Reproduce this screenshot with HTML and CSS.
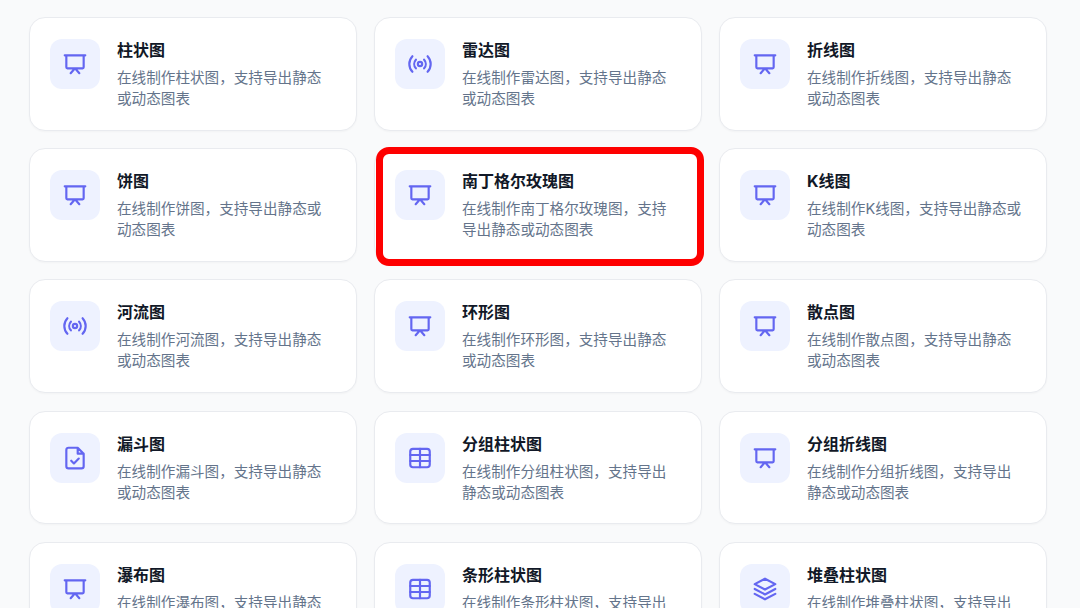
FILE: index.html
```html
<!DOCTYPE html>
<html lang="zh-CN">
<head>
  <meta charset="UTF-8" />
  <meta name="viewport" content="width=device-width, initial-scale=1.0"/>
  <title>在线图表</title>
  <link rel="stylesheet" href="styles.css">
</head>
<body>

  <svg class="icon-defs" aria-hidden="true">
    <symbol id="i-screen" viewBox="0 0 24 24">
      <path d="M2.5 4h19M4 4v11a1 1 0 0 0 1 1h14a1 1 0 0 0 1-1V4M12 16l-4 4.5M12 16l4 4.5"/>
    </symbol>
    <symbol id="i-signal" viewBox="0 0 24 24">
      <circle cx="12" cy="12" r="2"/>
      <path d="M8.2 8a6 6 0 0 0 0 8M15.8 8a6 6 0 0 1 0 8M5 4.8a10.5 10.5 0 0 0 0 14.4M19 4.8a10.5 10.5 0 0 1 0 14.4"/>
    </symbol>
    <symbol id="i-doc" viewBox="0 0 24 24">
      <path d="M14.5 2.5H6a2 2 0 0 0-2 2v15a2 2 0 0 0 2 2h12a2 2 0 0 0 2-2V8zM14.5 2.5V8H20M8.5 14.5l2.5 2.5 4.5-4.5"/>
    </symbol>
    <symbol id="i-table" viewBox="0 0 24 24">
      <rect x="3" y="3.5" width="18" height="17" rx="2.5"/>
      <path d="M3 9.2h18M3 14.8h18M12 3.5v17"/>
    </symbol>
    <symbol id="i-stack" viewBox="0 0 24 24">
      <path d="M12 2.5 2.5 7.5 12 12.5l9.5-5zM2.5 12 12 17l9.5-5M2.5 16.5l9.5 5 9.5-5"/>
    </symbol>
  </svg>

  <div class="chart-grid">

    <div class="card">
      <div class="card-icon"><svg><use href="#i-screen"/></svg></div>
      <div class="card-text">
        <h3>柱状图</h3>
        <p>在线制作柱状图，支持导出静态或动态图表</p>
      </div>
    </div>
    <div class="card">
      <div class="card-icon"><svg><use href="#i-signal"/></svg></div>
      <div class="card-text">
        <h3>雷达图</h3>
        <p>在线制作雷达图，支持导出静态或动态图表</p>
      </div>
    </div>
    <div class="card">
      <div class="card-icon"><svg><use href="#i-screen"/></svg></div>
      <div class="card-text">
        <h3>折线图</h3>
        <p>在线制作折线图，支持导出静态或动态图表</p>
      </div>
    </div>

    <div class="card">
      <div class="card-icon"><svg><use href="#i-screen"/></svg></div>
      <div class="card-text">
        <h3>饼图</h3>
        <p>在线制作饼图，支持导出静态或动态图表</p>
      </div>
    </div>
    <div class="card highlighted">
      <div class="card-icon"><svg><use href="#i-screen"/></svg></div>
      <div class="card-text">
        <h3>南丁格尔玫瑰图</h3>
        <p>在线制作南丁格尔玫瑰图，支持导出静态或动态图表</p>
      </div>
    </div>
    <div class="card">
      <div class="card-icon"><svg><use href="#i-screen"/></svg></div>
      <div class="card-text">
        <h3>K线图</h3>
        <p>在线制作K线图，支持导出静态或动态图表</p>
      </div>
    </div>

    <div class="card">
      <div class="card-icon"><svg><use href="#i-signal"/></svg></div>
      <div class="card-text">
        <h3>河流图</h3>
        <p>在线制作河流图，支持导出静态或动态图表</p>
      </div>
    </div>
    <div class="card">
      <div class="card-icon"><svg><use href="#i-screen"/></svg></div>
      <div class="card-text">
        <h3>环形图</h3>
        <p>在线制作环形图，支持导出静态或动态图表</p>
      </div>
    </div>
    <div class="card">
      <div class="card-icon"><svg><use href="#i-screen"/></svg></div>
      <div class="card-text">
        <h3>散点图</h3>
        <p>在线制作散点图，支持导出静态或动态图表</p>
      </div>
    </div>

    <div class="card">
      <div class="card-icon"><svg><use href="#i-doc"/></svg></div>
      <div class="card-text">
        <h3>漏斗图</h3>
        <p>在线制作漏斗图，支持导出静态或动态图表</p>
      </div>
    </div>
    <div class="card">
      <div class="card-icon"><svg><use href="#i-table"/></svg></div>
      <div class="card-text">
        <h3>分组柱状图</h3>
        <p>在线制作分组柱状图，支持导出静态或动态图表</p>
      </div>
    </div>
    <div class="card">
      <div class="card-icon"><svg><use href="#i-screen"/></svg></div>
      <div class="card-text">
        <h3>分组折线图</h3>
        <p>在线制作分组折线图，支持导出静态或动态图表</p>
      </div>
    </div>

    <div class="card">
      <div class="card-icon"><svg><use href="#i-screen"/></svg></div>
      <div class="card-text">
        <h3>瀑布图</h3>
        <p>在线制作瀑布图，支持导出静态或动态图表</p>
      </div>
    </div>
    <div class="card">
      <div class="card-icon"><svg><use href="#i-table"/></svg></div>
      <div class="card-text">
        <h3>条形柱状图</h3>
        <p>在线制作条形柱状图，支持导出静态或动态图表</p>
      </div>
    </div>
    <div class="card">
      <div class="card-icon"><svg><use href="#i-stack"/></svg></div>
      <div class="card-text">
        <h3>堆叠柱状图</h3>
        <p>在线制作堆叠柱状图，支持导出静态或动态图表</p>
      </div>
    </div>

  </div>

</body>
</html>
```

FILE: styles.css
```css
html, body {
  height: 608px;
  overflow: hidden;
}
body {
  font-family: Inter, 'Noto Sans CJK SC', sans-serif;
  background: #f9fafb;
  margin: 0;
}
.icon-defs {
  display: none;
}
.chart-grid {
  display: grid;
  grid-template-columns: repeat(3, 328px);
  grid-auto-rows: 113.75px;
  column-gap: 17px;
  row-gap: 17.5px;
  padding: 16.8px 0 0 28.5px;
}
.card {
  position: relative;
  display: flex;
  gap: 17px;
  box-sizing: border-box;
  padding: 21px 20.5px;
  background: #fff;
  border: 1px solid #e9ebef;
  border-radius: 16px;
  box-shadow: 0 1px 2px rgba(0, 0, 0, 0.03);
}
.highlighted::after {
  content: "";
  position: absolute;
  top: -2px;
  left: 1.5px;
  right: -3.5px;
  bottom: -5px;
  border: 7px solid #fe0000;
  border-radius: 13px;
}
.card-icon {
  flex: none;
  display: flex;
  align-items: center;
  justify-content: center;
  width: 50px;
  height: 50px;
  background: #eef2ff;
  border-radius: 12px;
}
.card-icon svg {
  width: 26px;
  height: 26px;
  fill: none;
  stroke: #6366f1;
  stroke-width: 2;
  stroke-linecap: round;
  stroke-linejoin: round;
}
.card-text h3 {
  margin: 0 0 7px;
  font-size: 16px;
  line-height: 22px;
  font-weight: 700;
  color: #111827;
}
.card-text p {
  width: 216px;
  margin: 0;
  font-size: 14.6px;
  line-height: 21px;
  color: #64748b;
}
```
